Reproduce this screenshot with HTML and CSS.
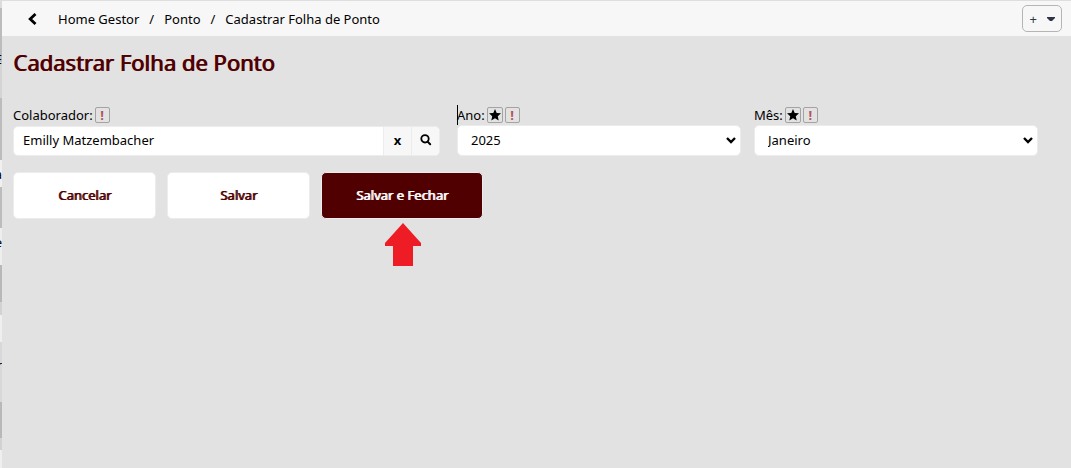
FILE: index.html
```html
<!DOCTYPE html>
<html lang="pt-BR">
<head>
<meta charset="utf-8">
<title>Cadastrar Folha de Ponto</title>
<link rel="stylesheet" href="styles.css">
</head>
<body>
<div class="edge" aria-hidden="true">
  <span class="edge-text edge-text-1">E</span>
  <span class="edge-text edge-text-2">a</span>
  <span class="edge-text edge-text-3">e</span>
  <span class="edge-text edge-text-4">r</span>
</div>
<div class="page">
  <header class="topbar">
    <button class="back" type="button" aria-label="Voltar">
      <svg width="9" height="12" viewBox="0 0 9 12"><path d="M7.500 1 2.200 6l5.300 5" fill="none" stroke="#000" stroke-width="2.800"/></svg>
    </button>
    <nav class="crumbs">
      <a href="#">Home Gestor</a><span>/</span><a href="#">Ponto</a><span>/</span><a href="#">Cadastrar Folha de Ponto</a>
    </nav>
    <button class="add" type="button" aria-label="Adicionar">
      <span>+</span>
      <svg width="8" height="7" viewBox="0 0 8 7"><path d="M0 2h8v1L5 6H3L0 3z" fill="#2f3545"/></svg>
    </button>
  </header>
  <main class="content">
    <h1 class="title">Cadastrar Folha de Ponto</h1>
    <form class="form">
      <div class="fields">
        <div class="field field-person">
          <div class="label-row">
            <label for="colaborador">Colaborador:</label><span class="tag tag-alert">!</span>
          </div>
          <div class="lookup">
            <input id="colaborador" type="text" value="Emilly Matzembacher">
            <button type="button" aria-label="Limpar">x</button>
            <button type="button" aria-label="Pesquisar">
              <svg width="12" height="12" viewBox="0 0 12 12"><circle cx="5" cy="4.800" r="3.700" fill="none" stroke="#000" stroke-width="1.800"/><path d="m7.600 7.600 2.600 2.600" stroke="#000" stroke-width="2" stroke-linecap="round"/></svg>
            </button>
          </div>
        </div>
        <div class="field">
          <div class="label-row label-caret">
            <label for="ano">Ano:</label><span class="tag"><svg width="12" height="12" viewBox="0 0 12 12"><path d="m6 0 1.700 3.900 4.300.4-3.200 2.900.9 4.300L6 9.300l-3.700 2.200.9-4.300L0 4.300l4.300-.4z"/></svg></span><span class="tag tag-alert">!</span>
          </div>
          <div class="select"><select id="ano"><option>2025</option></select><svg width="10" height="7" viewBox="0 0 10 7"><path d="m1 1 4 4 4-4" fill="none" stroke="#000" stroke-width="2.400"/></svg></div>
        </div>
        <div class="field">
          <div class="label-row">
            <label for="mes">Mês:</label><span class="tag"><svg width="12" height="12" viewBox="0 0 12 12"><path d="m6 0 1.700 3.900 4.300.4-3.200 2.900.9 4.300L6 9.300l-3.700 2.200.9-4.300L0 4.300l4.300-.4z"/></svg></span><span class="tag tag-alert">!</span>
          </div>
          <div class="select"><select id="mes"><option>Janeiro</option></select><svg width="10" height="7" viewBox="0 0 10 7"><path d="m1 1 4 4 4-4" fill="none" stroke="#000" stroke-width="2.400"/></svg></div>
        </div>
      </div>
      <div class="actions">
        <button class="btn" type="button">Cancelar</button>
        <button class="btn" type="button">Salvar</button>
        <div class="primary-wrap">
          <button class="btn btn-primary" type="submit">Salvar e Fechar</button>
          <svg class="pointer" width="36" height="43" viewBox="0 0 36 43"><path d="M18 0 36 20v3h-8v20H8V23H0v-3z" fill="#ee1c25"/></svg>
        </div>
      </div>
    </form>
  </main>
</div>
</body>
</html>
```
FILE: styles.css
```css
* { box-sizing: border-box; }

body {
  margin: 0;
  min-height: 100vh;
  display: flex;
  background: #e2e2e2;
  color: #000;
  font: 13px/18px "Noto Sans", "Open Sans", sans-serif;
}

button, input, select { font: inherit; color: inherit; }
svg { display: block; }

/* Sliver of the page behind the panel */
.edge {
  position: relative;
  width: 2px;
  flex: none;
  overflow: hidden;
  background: linear-gradient(#dcdcdc 0 8px, #bcbcbc 8px 62px, #d4d4d4 62px 98px, #bcbcbc 98px 160px, #f0f0f0 160px 187px, #bcbcbc 187px 228px, #eee 228px 265px, #b8b8b8 265px 302px, #d2d2d2 302px 315px, #efefef 315px 342px, #d8d8d8 342px 402px, #b8b8b8 402px 438px, #d2d2d2 438px 450px, #efefef 450px);
}
.edge-text { position: absolute; right: 0; }
.edge-text-1 { top: 50px; }
.edge-text-2 { top: 165px; }
.edge-text-3 { top: 233px; }
.edge-text-4 { top: 356px; }

.page { flex: 1; min-width: 0; }

.topbar {
  display: flex;
  align-items: center;
  height: 36px;
  padding: 0 9px 0 22px;
  border-top: 1px solid #dedede;
  background: #f7f7f7;
}
.back { padding: 4px; border: 0; background: none; }
.crumbs { display: flex; gap: 10px; margin-left: 17px; }
.crumbs a { color: inherit; text-decoration: none; }

.add {
  display: flex;
  align-items: center;
  gap: 10px;
  height: 27px;
  margin-left: auto;
  padding: 0 6px 0 7px;
  border: 1px solid #b5b5b5;
  border-radius: 5px;
  background: #f7f7f7;
  color: #2f3545;
}

.content { padding: 10px 33px 0 11px; }

.title {
  margin: 0 0 27px;
  color: #500000;
  font-size: 22px;
  font-weight: 400;
  line-height: 32px;
  text-shadow: 1px 0 0 #500000;
}

.fields {
  display: grid;
  grid-template-columns: 431fr 284fr 284fr;
  gap: 13px;
  align-items: center;
}
.field-person { padding-right: 4px; }

.label-row { display: flex; align-items: center; gap: 2px; height: 20px; padding-bottom: 1px; }
.label-caret { box-shadow: inset 1px 0 0 #000; }

.tag {
  display: flex;
  align-items: center;
  justify-content: center;
  width: 16px;
  height: 16px;
  border: 1px solid #a3a3a3;
  border-radius: 2px;
}
.tag-alert { width: 15px; color: #b4545a; font-weight: 700; line-height: 14px; }

.lookup {
  display: flex;
  height: 30px;
  border: 1px solid #ececec;
  border-radius: 5px;
  overflow: hidden;
  background: #fff;
}
.lookup input { flex: 1; min-width: 0; padding: 0 9px 2px; border: 0; background: none; }
.lookup button {
  display: flex;
  align-items: center;
  justify-content: center;
  width: 28px;
  padding: 0 0 2px;
  border: 0;
  border-left: 1px solid #ececec;
  background: #f7f7f7;
  font-weight: 700;
}

.select { display: grid; align-items: center; }
.select select, .select svg { grid-area: 1 / 1; }
.select select {
  width: 100%;
  height: 31px;
  padding: 0 13px 2px;
  border: 1px solid #ececec;
  border-radius: 5px;
  background: #fff;
  appearance: none;
}
.select svg { justify-self: end; margin-right: 5px; pointer-events: none; }

.actions { display: flex; gap: 11px; margin-top: 16px; }
.btn {
  width: 143px;
  height: 47px;
  padding: 0 0 2px;
  border: 1px solid #ececec;
  border-radius: 5px;
  background: #fff;
  color: #500000;
  text-shadow: 1px 0 0 #500000;
}
.btn-primary { width: 162px; background: #500000; color: #fff; text-shadow: 1px 0 0 #fff; }

/* Arrow callout below the primary action */
.primary-wrap { position: relative; }
.pointer { position: absolute; top: 51px; left: 64px; }
```
